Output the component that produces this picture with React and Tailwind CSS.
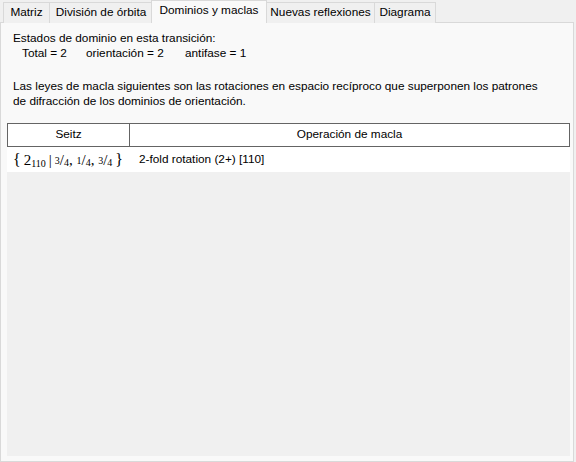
import React from 'react';

const tabs = [
  { label: 'Matriz', width: 'w-[47px]', shift: '' },
  { label: 'División de órbita', width: 'w-[104px]', shift: '-ml-px' },
  { label: 'Dominios y maclas', width: 'w-[116px]', shift: '-ml-[2px]', active: true },
  { label: 'Nuevas reflexiones', width: 'w-[109px]', shift: '-ml-px' },
  { label: 'Diagrama', width: 'w-[62px]', shift: '-ml-px' },
];

function Frac({ num, den }) {
  return (
    <span className="inline-flex items-baseline">
      <sup className="text-[10px] relative -top-[1px]">{num}</sup>
      <span className="text-[15px]">/</span>
      <sub className="text-[10px] relative top-[1px]">{den}</sub>
    </span>
  );
}

function SeitzSymbol() {
  return (
    <span className="font-['Liberation_Serif',serif] text-[15px] leading-none whitespace-nowrap">
      <span className="text-[16px]">{'{'}</span>
      <span className="ml-[3px]">2</span>
      <sub className="text-[10px]">110</sub>
      <span className="mx-[3px]">|</span>
      <Frac num="3" den="4" />,{' '}
      <Frac num="1" den="4" />,{' '}
      <Frac num="3" den="4" />
      <span className="ml-[3px] text-[16px]">{'}'}</span>
    </span>
  );
}

export default function App() {
  return (
    <div className="w-[576px] h-[462px] bg-[#f0f0f0] font-['Liberation_Sans',Arial,sans-serif] text-[11.8px] text-black overflow-hidden">
      {/* tab strip */}
      <div className="flex items-end h-[23px] pl-[3px] relative z-10">
        {tabs.map((t) => (
          <div
            key={t.label}
            className={
              t.active
                ? `${t.width} ${t.shift} h-[23px] bg-[#f9f9f9] border border-b-0 border-[#d9d9d9] flex items-center justify-center leading-none pb-[2px] z-10`
                : `${t.width} ${t.shift} h-[21px] bg-[#f0f0f0] border border-b-0 border-[#d9d9d9] flex items-center justify-center leading-none`
            }
          >
            {t.label}
          </div>
        ))}
      </div>

      {/* tab page */}
      <div className="-mt-px w-[574px] h-[440px] bg-[#f9f9f9] border border-[#d9d9d9] flex flex-col">
        <div className="pl-[12px] pt-[8px] leading-[15px]">
          <div>Estados de dominio en esta transición:</div>
          <div className="pl-[9px] flex">
            <span className="w-[64px]">Total = 2</span>
            <span className="w-[99px]">orientación = 2</span>
            <span>antifase = 1</span>
          </div>
          <p className="mt-[18px]">
            Las leyes de macla siguientes son las rotaciones en espacio recíproco que superponen los patrones
            <br />
            de difracción de los dominios de orientación.
          </p>
        </div>

        {/* twin operations grid */}
        <div className="ml-[6px] mr-[3px] mt-[14px] mb-[5px] flex-1 bg-[#f0f0f0] flex flex-col">
          <div className="flex h-[24px] bg-white border border-[#646464]">
            <div className="w-[122px] border-r border-[#646464] flex items-center justify-center">Seitz</div>
            <div className="flex-1 flex items-center justify-center">Operación de macla</div>
          </div>
          <div className="flex h-[25px] bg-white items-center">
            <div className="w-[123px] pl-[6px] flex items-center">
              <SeitzSymbol />
            </div>
            <div className="pl-[9px]">2-fold rotation (2+) [110]</div>
          </div>
        </div>
      </div>
    </div>
  );
}
